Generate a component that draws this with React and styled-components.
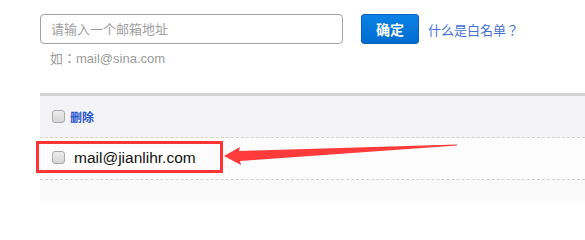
import React from 'react'
import styled, { createGlobalStyle } from 'styled-components'

const GlobalStyle = createGlobalStyle`
  html, body {
    margin: 0;
    padding: 0;
    background: #fff;
  }
  body {
    font-family: "Liberation Sans", "Noto Sans CJK SC", Arial, sans-serif;
  }
`

const Page = styled.div`
  position: relative;
  width: 585px;
  height: 201px;
  overflow: hidden;
  padding-top: 14px;
  box-sizing: border-box;
`

const FormRow = styled.div`
  display: flex;
  align-items: center;
  margin-left: 40px;
`

const EmailInput = styled.input`
  box-sizing: border-box;
  width: 303px;
  height: 30px;
  padding: 0 10px;
  border: 1px solid #a3a3a3;
  border-radius: 4px;
  font-family: inherit;
  font-size: 13px;
  color: #333;
  outline: none;
  &::placeholder {
    color: #a0a0a0;
  }
`

const SubmitButton = styled.button`
  box-sizing: border-box;
  margin-left: 18px;
  width: 58px;
  height: 30px;
  border: 1px solid #0a62b8;
  border-radius: 3px;
  background: linear-gradient(#0b82e6, #006cd0);
  color: #fff;
  font-family: inherit;
  font-size: 14px;
  font-weight: bold;
  cursor: pointer;
`

const HelpLink = styled.a`
  margin-left: 9px;
  font-family: "Liberation Sans", "Noto Sans CJK TC", sans-serif;
  font-size: 13px;
  color: #4470d6;
  text-decoration: none;
`

const Hint = styled.div`
  margin: 6px 0 0 50px;
  font-family: "Liberation Sans", "Noto Sans CJK TC", sans-serif;
  font-size: 13px;
  line-height: 17px;
  color: #9a9a9a;
`

const Panel = styled.div`
  margin: 26px 0 0 40px;
  height: 120px;
  border-top: 3px solid #d3d3d3;
  background: #f9f9f9;
`

const Row = styled.div`
  display: flex;
  align-items: center;
  height: 41px;
  padding-left: 12px;
  background: ${p => (p.$head ? '#f4f4f6' : '#fcfcfc')};
  border-bottom: 1px dashed #d2d2d2;
`

const Check = styled.input.attrs({ type: 'checkbox' })`
  appearance: none;
  box-sizing: border-box;
  width: 13px;
  height: 13px;
  margin: 0;
  border: 1px solid #aaa;
  border-radius: 3px;
  background: linear-gradient(#ececec, #d6d6d6);
  margin-top: ${p => (p.$up ? '-2px' : '0')};
`

const DeleteLink = styled.a`
  margin-left: 5px;
  font-size: 12px;
  font-weight: bold;
  color: #2858cc;
  text-decoration: none;
`

const Email = styled.span`
  margin-left: 8px;
  padding: 1px 3px 1px 1px;
  background: #fff;
  font-size: 15.5px;
  color: #111;
  margin-top: -2px;
`

const Annotation = styled.svg`
  position: absolute;
  left: 0;
  top: 0;
  pointer-events: none;
`

export default function App () {
  return (
    <Page>
      <GlobalStyle />
      <FormRow>
        <EmailInput placeholder='请输入一个邮箱地址' />
        <SubmitButton>确定</SubmitButton>
        <HelpLink href='#'>什么是白名单？</HelpLink>
      </FormRow>
      <Hint>如：mail@sina.com</Hint>
      <Panel>
        <Row $head>
          <Check />
          <DeleteLink href='#'>删除</DeleteLink>
        </Row>
        <Row>
          <Check $up />
          <Email>mail@jianlihr.com</Email>
        </Row>
      </Panel>
      <Annotation width='585' height='201' viewBox='0 0 585 201'>
        <rect x='37.5' y='142.5' width='184' height='29' fill='none' stroke='#ff3535' strokeWidth='3' />
        <polygon
          fill='#ff3a3a'
          points='224,156 240,147 239,151 457,144.5 457,145.5 240,161 241,165'
        />
      </Annotation>
    </Page>
  )
}
